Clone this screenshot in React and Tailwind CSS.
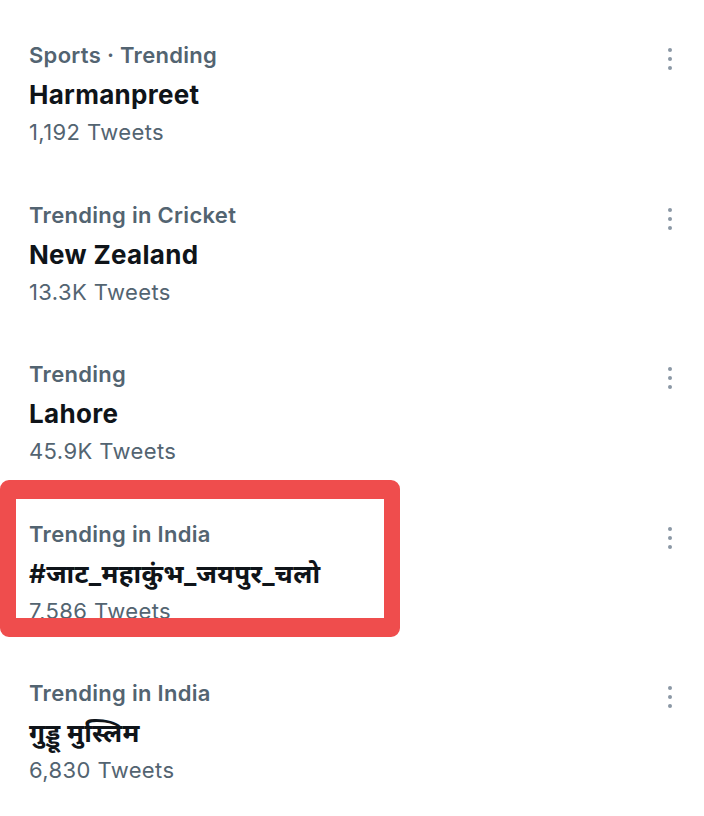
const trends = [
  { category: 'Sports · Trending', title: 'Harmanpreet', count: '1,192 Tweets' },
  { category: 'Trending in Cricket', title: 'New Zealand', count: '13.3K Tweets' },
  { category: 'Trending', title: 'Lahore', count: '45.9K Tweets' },
  { category: 'Trending in India', title: '#जाट_महाकुंभ_जयपुर_चलो', count: '7,586 Tweets', highlight: true },
  { category: 'Trending in India', title: 'गुड्डू मुस्लिम', count: '6,830 Tweets' },
]

function MoreIcon() {
  return (
    <div className="flex w-[20px] flex-col items-center gap-[5px] pt-[8px]">
      <span className="h-[4px] w-[4px] rounded-full bg-[#8b98a5]" />
      <span className="h-[4px] w-[4px] rounded-full bg-[#8b98a5]" />
      <span className="h-[4px] w-[4px] rounded-full bg-[#8b98a5]" />
    </div>
  )
}

function TrendRow({ category, title, count, highlight }) {
  return (
    <div className="relative flex h-[159.5px] items-start pl-[29px] pr-[24px] pt-[40px]">
      <div className="flex-1">
        <div className="text-[22px] font-semibold leading-[30px] tracking-[0.3px] text-[#536471]">{category}</div>
        <div className="mt-[5px] text-[26px] font-bold leading-[40px] tracking-[0.3px] text-[#0f1419]">{title}</div>
        <div className="text-[22px] leading-[34px] tracking-[0.4px] text-[#536471]">{count}</div>
      </div>
      <MoreIcon />
      {highlight && (
        <div className="absolute left-0 top-[1.5px] h-[157px] w-[400px] rounded-[9px] border-x-[16px] border-y-[19px] border-[#ef4d4d]" />
      )}
    </div>
  )
}

export default function App() {
  return (
    <div
      className="min-h-[816px] w-[704px] bg-white"
      style={{ fontFamily: 'Inter, "Noto Sans", "Noto Sans Devanagari", sans-serif' }}
    >
      {trends.map(t => (
        <TrendRow key={t.title} {...t} />
      ))}
    </div>
  )
}
